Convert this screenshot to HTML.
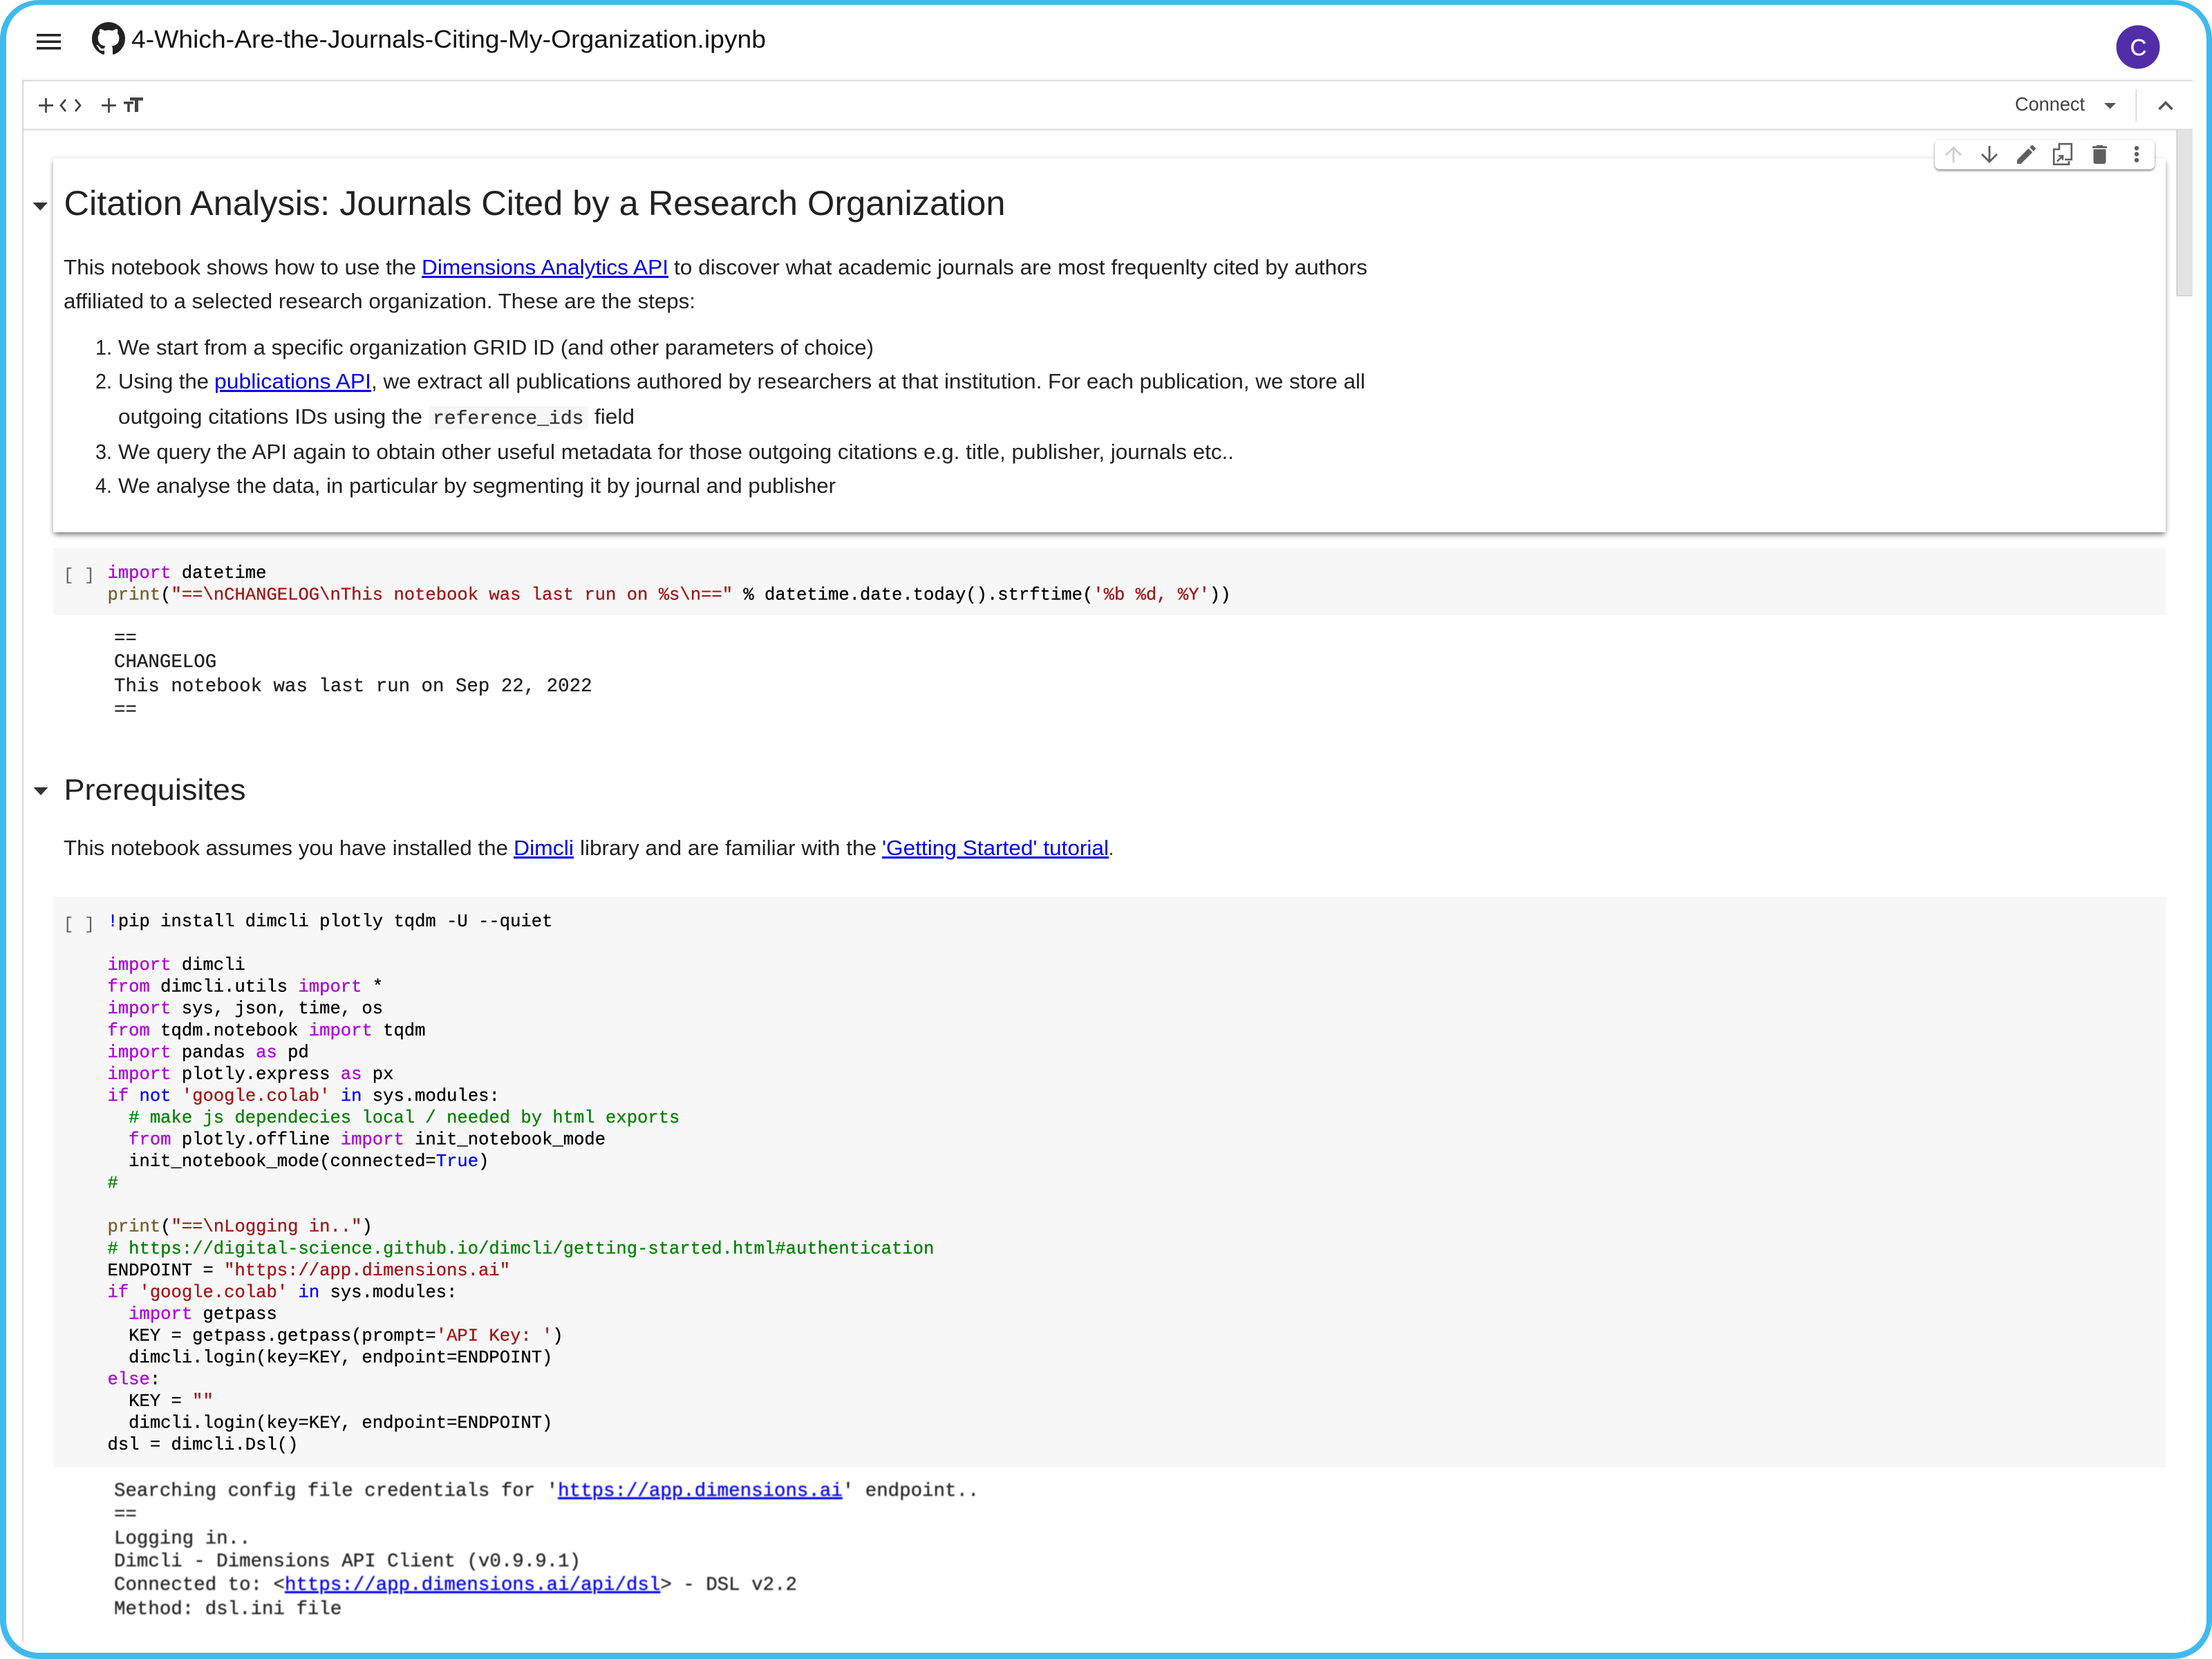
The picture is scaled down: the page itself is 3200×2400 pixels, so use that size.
<!DOCTYPE html>
<html><head><meta charset="utf-8"><title>4-Which-Are-the-Journals-Citing-My-Organization.ipynb</title>
<style>
html,body{margin:0;padding:0;background:#fff;width:3200px;height:2400px;overflow:hidden}
#frame{position:absolute;left:0;top:0;width:3200px;height:2400px;box-sizing:border-box;border-style:solid;border-color:#3FBAEE;border-width:7px 8px 9px 9px;border-radius:56px;z-index:5;pointer-events:none}
#cell{position:absolute;left:77px;top:229px;width:3056px;height:541px;background:#fff;box-shadow:0 5px 8px -2px rgba(0,0,0,.5),0 1px 7px rgba(0,0,0,.14)}
#tb{position:absolute;left:2799px;top:202px;width:318px;height:43px;background:#fff;border-radius:7px;box-shadow:0 2px 3px rgba(0,0,0,.45),0 0 2px rgba(0,0,0,.08)}
svg{position:absolute;left:0;top:0}
text{white-space:pre}
.b{font:31px "Liberation Sans",sans-serif;fill:#212121}
.l{font:31px "Liberation Sans",sans-serif;fill:#0000EE;text-decoration:underline}
.m{font:25.55px "Liberation Mono",monospace;fill:#000;stroke:#000;stroke-width:.3px}
.o{font:27.45px "Liberation Mono",monospace;fill:#212121;stroke:#212121;stroke-width:.3px}
.k{fill:#AF00DB;stroke:#AF00DB}.n{fill:#0000FF;stroke:#0000FF}.s{fill:#A31515;stroke:#A31515}.f{fill:#795E26;stroke:#795E26}
.c{fill:#008000;stroke:#008000}
.a{fill:#0000EE;stroke:#0000EE;text-decoration:underline}
</style></head><body>
<div id="frame"></div>
<svg width="3200" height="2400" viewBox="0 0 3200 2400" style="z-index:0">
<rect x="32" y="116" width="2" height="2259" fill="#d6d6d6"/>
<rect x="32" y="115.5" width="3140" height="2" fill="#d9d9d9"/>
<rect x="32" y="186.5" width="3140" height="2" fill="#d9d9d9"/>
<rect x="3149" y="188" width="23" height="240" fill="#e3e3e3"/>
<rect x="3148.5" y="188" width="1.5" height="240" fill="#c9c9c9"/>
<rect x="3148.5" y="427" width="23.5" height="1.5" fill="#c9c9c9"/>
<rect x="77" y="792" width="3056" height="98" fill="#f7f7f7"/>
<rect x="77" y="1297" width="3056" height="826" fill="#f7f7f7"/>
</svg>
<div id="cell"></div>
<div id="tb"></div>
<svg width="3200" height="2400" viewBox="0 0 3200 2400" style="z-index:2">
<!-- header -->
<g fill="#222"><rect x="53" y="49" width="35" height="3.6"/><rect x="53" y="58.5" width="35" height="3.6"/><rect x="53" y="68" width="35" height="3.6"/></g>
<g transform="translate(133 32) scale(3)"><path fill="#222" d="M8 0C3.58 0 0 3.58 0 8c0 3.54 2.29 6.53 5.47 7.59.4.07.55-.17.55-.38 0-.19-.01-.82-.01-1.49-2.01.37-2.53-.49-2.69-.94-.09-.23-.48-.94-.82-1.13-.28-.15-.68-.52-.01-.53.63-.01 1.08.58 1.23.82.72 1.21 1.87.87 2.33.66.07-.52.28-.87.51-1.07-1.78-.2-3.64-.89-3.64-3.95 0-.87.31-1.59.82-2.15-.08-.2-.36-1.02.08-2.12 0 0 .67-.21 2.2.82.64-.18 1.32-.27 2-.27s1.36.09 2 .27c1.53-1.04 2.2-.82 2.2-.82.44 1.1.16 1.92.08 2.12.51.56.82 1.27.82 2.15 0 3.07-1.87 3.75-3.65 3.95.29.25.54.73.54 1.48 0 1.07-.01 1.93-.01 2.2 0 .21.15.46.55.38A8.01 8.01 0 0 0 16 8c0-4.42-3.58-8-8-8z"/></g>
<text x="190" y="69" textLength="918" lengthAdjust="spacingAndGlyphs" style="font:36px 'Liberation Sans',sans-serif;fill:#111">4-Which-Are-the-Journals-Citing-My-Organization.ipynb</text>
<circle cx="3093" cy="68" r="31.5" fill="#512DA8"/>
<text x="3093.500" y="80" text-anchor="middle" style="font:33px 'Liberation Sans',sans-serif;fill:#fff;stroke:#fff;stroke-width:.4px">C</text>
<!-- toolbar -->
<g stroke="#444" stroke-width="2.8" fill="none">
<path d="M56 152.5H77M66.5 142V163"/><path d="M147 152.5H168M157.5 142V163"/>
<path d="M95 144L88 152.5L95 161M109 144L116 152.5L109 161"/>
</g>
<g fill="#444"><path d="M179 147h14v3.500h-5.200V162h-3.600V150.500H179z"/><path d="M188 141h19v4.500h-7V162h-5V145.500h-7z"/></g>
<text x="2915" y="160" textLength="101" lengthAdjust="spacingAndGlyphs" style="font:28px 'Liberation Sans',sans-serif;fill:#424242">Connect</text>
<path d="M3044 149H3061L3052.500 157.500Z" fill="#555"/>
<rect x="3089.5" y="129" width="1.500" height="47" fill="#d4d4d4"/>
<path d="M3123.500 158L3133 148.500L3142.500 158" fill="none" stroke="#555" stroke-width="3.600"/>
<!-- cell toolbar icons -->
<path d="M2826 235V213.500M2815 224.500L2826 213.500L2837 224.500" fill="none" stroke="#cfcfcf" stroke-width="2.800"/>
<path d="M2878 211V234M2867 223L2878 234L2889 223" fill="none" stroke="#5f5f5f" stroke-width="2.800"/>
<g transform="translate(2913.500 205.500) scale(1.500)"><path fill="#5f5f5f" d="M3 17.250V21h3.750L17.810 9.940l-3.750-3.750L3 17.250zM20.710 7.040c.39-.39.39-1.020 0-1.410l-2.340-2.340c-.39-.39-1.020-.39-1.410 0l-1.830 1.830 3.750 3.750 1.830-1.830z"/></g>
<g fill="none" stroke="#5f5f5f" stroke-width="2.600">
<path d="M2979 217V208.200H2996.800V230.800H2987"/>
<path d="M2979 216H2971.200V237.800H2993V233"/>
<path d="M2976 233.500L2983.500 226M2978 225.500H2984V231.500"/>
</g>
<g transform="translate(3019.500 205.500) scale(1.500)"><path fill="#5f5f5f" d="M6 19c0 1.100.9 2 2 2h8c1.100 0 2-.9 2-2V7H6v12zM19 4h-3.500l-1-1h-5l-1 1H5v2h14V4z"/></g>
<g fill="#5f5f5f"><circle cx="3091" cy="214.300" r="3.200"/><circle cx="3091" cy="223" r="3.200"/><circle cx="3091" cy="231.700" r="3.200"/></g>
<!-- text cell 1 -->
<path d="M47.500 293H69L58.250 304.500Z" fill="#333"/>
<text x="92.500" y="311" textLength="1362" lengthAdjust="spacingAndGlyphs" style="font:50px 'Liberation Sans',sans-serif;fill:#212121">Citation Analysis: Journals Cited by a Research Organization</text>
<text class="b" x="92" y="397" textLength="510" lengthAdjust="spacingAndGlyphs">This notebook shows how to use the</text>
<text class="l" x="610" y="397" textLength="357" lengthAdjust="spacingAndGlyphs">Dimensions Analytics API</text>
<text class="b" x="975" y="397" textLength="1003" lengthAdjust="spacingAndGlyphs">to discover what academic journals are most frequenlty cited by authors</text>
<text class="b" x="92" y="446" textLength="914" lengthAdjust="spacingAndGlyphs">affiliated to a selected research organization. These are the steps:</text>
<text class="b" x="138" y="513" textLength="24" lengthAdjust="spacingAndGlyphs">1.</text>
<text class="b" x="171" y="513" textLength="1093" lengthAdjust="spacingAndGlyphs">We start from a specific organization GRID ID (and other parameters of choice)</text>
<text class="b" x="138" y="562" textLength="24" lengthAdjust="spacingAndGlyphs">2.</text>
<text class="b" x="171" y="562" textLength="131" lengthAdjust="spacingAndGlyphs">Using the</text>
<text class="l" x="310" y="562" textLength="227" lengthAdjust="spacingAndGlyphs">publications API</text>
<text class="b" x="537" y="562" textLength="1438" lengthAdjust="spacingAndGlyphs">, we extract all publications authored by researchers at that institution. For each publication, we store all</text>
<text class="b" x="171" y="613" textLength="440" lengthAdjust="spacingAndGlyphs">outgoing citations IDs using the</text>
<rect x="620.500" y="588" width="230.500" height="33" rx="4" fill="#f6f6f6"/>
<text x="626" y="613" style="font:28px 'Liberation Mono',monospace;fill:#333;stroke:#333;stroke-width:.3px">reference_ids</text>
<text class="b" x="860" y="613" textLength="58" lengthAdjust="spacingAndGlyphs">field</text>
<text class="b" x="138" y="664" textLength="24" lengthAdjust="spacingAndGlyphs">3.</text>
<text class="b" x="171" y="664" textLength="1614" lengthAdjust="spacingAndGlyphs">We query the API again to obtain other useful metadata for those outgoing citations e.g. title, publisher, journals etc..</text>
<text class="b" x="138" y="713" textLength="24" lengthAdjust="spacingAndGlyphs">4.</text>
<text class="b" x="171" y="713" textLength="1038" lengthAdjust="spacingAndGlyphs">We analyse the data, in particular by segmenting it by journal and publisher</text>
<!-- code 1 -->
<text x="91.500" y="839" style="font:25.4px 'Liberation Mono',monospace;fill:#666">[ ]</text>
<text class="m" x="155.500" y="836"><tspan class="k">import</tspan> datetime</text>
<text class="m" x="155.500" y="867.500"><tspan class="f">print</tspan>(<tspan class="s">"==\nCHANGELOG\nThis notebook was last run on %s\n=="</tspan> % datetime.date.today().strftime(<tspan class="s">'%b %d, %Y'</tspan>))</text>
<!-- output 1 -->
<text class="o" x="165" y="930.500">==</text>
<text class="o" x="165" y="965">CHANGELOG</text>
<text class="o" x="165" y="1000">This notebook was last run on Sep 22, 2022</text>
<text class="o" x="165" y="1034">==</text>
<!-- prereq -->
<path d="M48.500 1139H69.500L59 1150.500Z" fill="#333"/>
<text x="92.500" y="1157" textLength="263" lengthAdjust="spacingAndGlyphs" style="font:43px 'Liberation Sans',sans-serif;fill:#212121">Prerequisites</text>
<text class="b" x="92" y="1237" textLength="643" lengthAdjust="spacingAndGlyphs">This notebook assumes you have installed the</text>
<text class="l" x="743" y="1237" textLength="87" lengthAdjust="spacingAndGlyphs">Dimcli</text>
<text class="b" x="839" y="1237" textLength="429" lengthAdjust="spacingAndGlyphs">library and are familiar with the</text>
<text class="l" x="1276" y="1237" textLength="328" lengthAdjust="spacingAndGlyphs">'Getting Started' tutorial</text>
<text class="b" x="1604" y="1237" textLength="7" lengthAdjust="spacingAndGlyphs">.</text>
<!-- code 2 -->
<text x="91.500" y="1344" style="font:25.4px 'Liberation Mono',monospace;fill:#666">[ ]</text>
<g>
<text class="m" x="155.500" y="1340"><tspan class="n">!</tspan>pip install dimcli plotly tqdm -U --quiet</text>
<text class="m" x="155.500" y="1403.100"><tspan class="k">import</tspan> dimcli</text>
<text class="m" x="155.500" y="1434.650"><tspan class="k">from</tspan> dimcli.utils <tspan class="k">import</tspan> *</text>
<text class="m" x="155.500" y="1466.200"><tspan class="k">import</tspan> sys, json, time, os</text>
<text class="m" x="155.500" y="1497.750"><tspan class="k">from</tspan> tqdm.notebook <tspan class="k">import</tspan> tqdm</text>
<text class="m" x="155.500" y="1529.300"><tspan class="k">import</tspan> pandas <tspan class="k">as</tspan> pd</text>
<text class="m" x="155.500" y="1560.850"><tspan class="k">import</tspan> plotly.express <tspan class="k">as</tspan> px</text>
<text class="m" x="155.500" y="1592.400"><tspan class="k">if</tspan> <tspan class="n">not</tspan> <tspan class="s">'google.colab'</tspan> <tspan class="n">in</tspan> sys.modules:</text>
<text class="m c" x="155.500" y="1623.950">  # make js dependecies local / needed by html exports</text>
<text class="m" x="155.500" y="1655.500">  <tspan class="k">from</tspan> plotly.offline <tspan class="k">import</tspan> init_notebook_mode</text>
<text class="m" x="155.500" y="1687.050">  init_notebook_mode(connected=<tspan class="n">True</tspan>)</text>
<text class="m c" x="155.500" y="1718.600">#</text>
<text class="m" x="155.500" y="1781.700"><tspan class="f">print</tspan>(<tspan class="s">"==\nLogging in.."</tspan>)</text>
<text class="m c" x="155.500" y="1813.250"># https://digital-science.github.io/dimcli/getting-started.html#authentication</text>
<text class="m" x="155.500" y="1844.800">ENDPOINT = <tspan class="s">"https://app.dimensions.ai"</tspan></text>
<text class="m" x="155.500" y="1876.350"><tspan class="k">if</tspan> <tspan class="s">'google.colab'</tspan> <tspan class="n">in</tspan> sys.modules:</text>
<text class="m" x="155.500" y="1907.900">  <tspan class="k">import</tspan> getpass</text>
<text class="m" x="155.500" y="1939.450">  KEY = getpass.getpass(prompt=<tspan class="s">'API Key: '</tspan>)</text>
<text class="m" x="155.500" y="1971">  dimcli.login(key=KEY, endpoint=ENDPOINT)</text>
<text class="m" x="155.500" y="2002.550"><tspan class="k">else</tspan>:</text>
<text class="m" x="155.500" y="2034.100">  KEY = <tspan class="s">""</tspan></text>
<text class="m" x="155.500" y="2065.650">  dimcli.login(key=KEY, endpoint=ENDPOINT)</text>
<text class="m" x="155.500" y="2097.200">dsl = dimcli.Dsl()</text>
</g>
<!-- output 2 -->
<g style="filter:blur(.7px)">
<text class="o" x="165" y="2164">Searching config file credentials for '<tspan class="a">https://app.dimensions.ai</tspan>' endpoint..</text>
<text class="o" x="165" y="2198">==</text>
<text class="o" x="165" y="2233">Logging in..</text>
<text class="o" x="165" y="2266">Dimcli - Dimensions API Client (v0.9.9.1)</text>
<text class="o" x="165" y="2300">Connected to: &lt;<tspan class="a">https://app.dimensions.ai/api/dsl</tspan>&gt; - DSL v2.2</text>
<text class="o" x="165" y="2335">Method: dsl.ini file</text>
</g>
</svg>
</body></html>
